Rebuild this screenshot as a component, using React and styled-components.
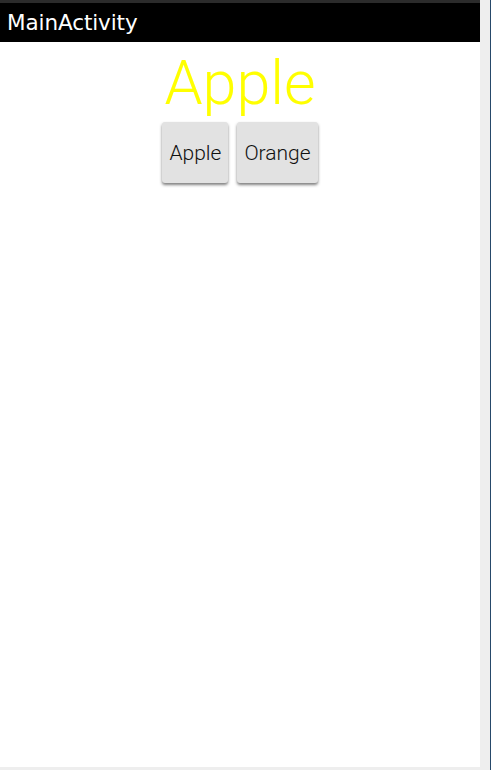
import React, {useState} from 'react';
import styled, {createGlobalStyle} from 'styled-components';

const GlobalStyle = createGlobalStyle`
  html, body {
    margin: 0;
    padding: 0;
    background: #eeeeee;
  }
  #root {
    height: 770px;
  }
`;

const Window = styled.div`
  display: flex;
  height: 770px;
  width: 491px;
  overflow: hidden;
`;

const Screen = styled.div`
  width: 480px;
  height: 767px;
  display: flex;
  flex-direction: column;
  background: #ffffff;
`;

const Gutter = styled.div`
  flex: 1;
  background: #eeeeee;
  border-right: 1px solid #26496a;
`;

const StatusStrip = styled.div`
  height: 3px;
  background: #2b2b2b;
`;

const ActionBar = styled.div`
  height: 39px;
  background: #000000;
  color: #ffffff;
  display: flex;
  align-items: center;
  padding-left: 7px;
  font-family: "DejaVu Sans", sans-serif;
  font-size: 21.5px;
  letter-spacing: -0.1px;
`;

const Content = styled.div`
  display: flex;
  flex-direction: column;
  align-items: center;
  padding-top: 7px;
`;

const FruitLabel = styled.div`
  font-family: Roboto, "Noto Sans", sans-serif;
  font-weight: 300;
  font-size: 61px;
  line-height: 68px;
  color: #ffff00;
`;

const ButtonRow = styled.div`
  display: flex;
  gap: 9px;
  margin-top: 5px;
`;

const FruitButton = styled.button`
  height: 61px;
  padding: 0 7px;
  border: none;
  border-radius: 3px;
  background: #e2e2e2;
  box-shadow: 0 2px 3px rgba(0, 0, 0, 0.5);
  font-family: Roboto, "Noto Sans", sans-serif;
  font-weight: 300;
  font-size: 21px;
  color: #111111;
  display: flex;
  align-items: center;
  cursor: pointer;
`;

const App = () => {
  const [fruit, setFruit] = useState('Apple');

  return (
    <Window>
      <GlobalStyle />
      <Screen>
        <StatusStrip />
        <ActionBar>MainActivity</ActionBar>
        <Content>
          <FruitLabel>{fruit}</FruitLabel>
          <ButtonRow>
            <FruitButton onClick={() => setFruit('Apple')}>Apple</FruitButton>
            <FruitButton onClick={() => setFruit('Orange')}>Orange</FruitButton>
          </ButtonRow>
        </Content>
      </Screen>
      <Gutter />
    </Window>
  );
};

export default App;
